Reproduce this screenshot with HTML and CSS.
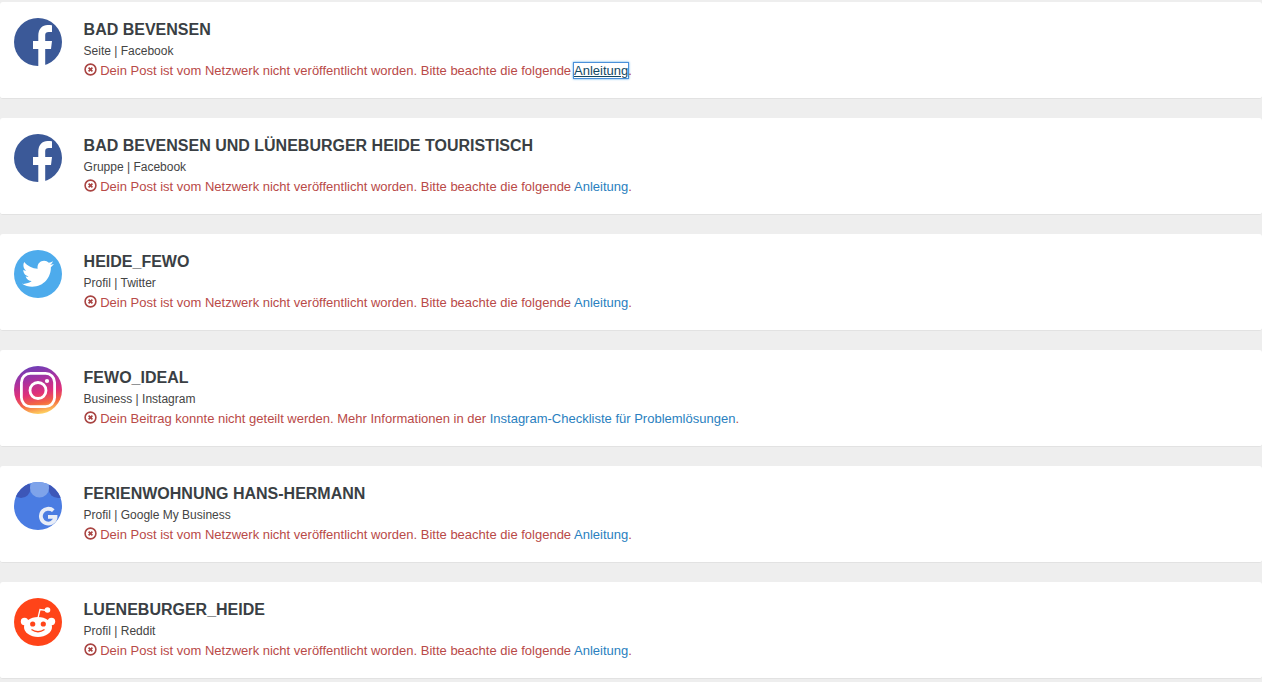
FILE: index.html
```html
<!DOCTYPE html>
<html lang="de">
<head>
    <meta charset="UTF-8">
    <meta name="viewport" content="width=device-width, initial-scale=1.0">
    <title>Netzwerke</title>
    <link rel="stylesheet" href="styles.css">
</head>
<body>

    <svg class="sprite" width="0" height="0" aria-hidden="true">
        <symbol id="err" viewBox="0 0 13 13">
            <circle cx="6.5" cy="6.5" r="5.4" fill="none" stroke="currentColor" stroke-width="1.6"/>
            <path d="M4.6 4.6l3.8 3.8M8.4 4.6l-3.8 3.8" fill="none" stroke="currentColor" stroke-width="1.7"/>
        </symbol>
        <symbol id="fb" viewBox="0 0 48 48">
            <circle cx="24" cy="24" r="24" fill="#3b5998"/>
            <path d="M24.3 48V31H19v-8h5.300v-5.500C24.300 11 28.500 7 33.500 7c2 0 3.700.2 4.500.3V14h-3.300c-2.300 0-3.500 1.200-3.500 3v6H38l-1 8h-5.800v17z" fill="#fff"/>
        </symbol>
    </svg>

    <div class="card">
        <svg class="logo"><use href="#fb"/></svg>
        <div class="info">
            <div class="name">BAD BEVENSEN</div>
            <div class="type">Seite | Facebook</div>
            <div class="msg"><svg class="err"><use href="#err"/></svg> Dein Post ist vom Netzwerk nicht veröffentlicht worden. Bitte beachte die folgende <a href="#" class="focus">Anleitung</a>.</div>
        </div>
    </div>

    <div class="card">
        <svg class="logo"><use href="#fb"/></svg>
        <div class="info">
            <div class="name">BAD BEVENSEN UND LÜNEBURGER HEIDE TOURISTISCH</div>
            <div class="type">Gruppe | Facebook</div>
            <div class="msg"><svg class="err"><use href="#err"/></svg> Dein Post ist vom Netzwerk nicht veröffentlicht worden. Bitte beachte die folgende <a href="#">Anleitung</a>.</div>
        </div>
    </div>

    <div class="card">
        <svg class="logo" viewBox="0 0 48 48">
            <circle cx="24" cy="24" r="24" fill="#4dabec"/>
            <path transform="translate(23.5 24) scale(.96) translate(-24 -24)" d="M41 13.5c-1.200.5-2.500.9-3.900 1 1.400-.8 2.500-2.100 3-3.700-1.300.8-2.800 1.300-4.300 1.600-1.300-1.300-3-2.100-5-2.100-3.700 0-6.800 3-6.800 6.800 0 .5.100 1 .2 1.500-5.600-.3-10.600-3-14-7.100-.6 1-.9 2.200-.9 3.400 0 2.400 1.200 4.400 3 5.700-1.100 0-2.200-.3-3.100-.8v.1c0 3.300 2.300 6 5.500 6.700-.6.2-1.200.2-1.800.2-.4 0-.9 0-1.300-.1.900 2.700 3.400 4.700 6.400 4.700-2.300 1.800-5.300 2.900-8.500 2.900-.6 0-1.100 0-1.600-.1 3 1.900 6.600 3.100 10.500 3.100 12.600 0 19.500-10.400 19.500-19.500v-.9c1.300-1 2.500-2.200 3.400-3.500z" fill="#fff"/>
        </svg>
        <div class="info">
            <div class="name">HEIDE_FEWO</div>
            <div class="type">Profil | Twitter</div>
            <div class="msg"><svg class="err"><use href="#err"/></svg> Dein Post ist vom Netzwerk nicht veröffentlicht worden. Bitte beachte die folgende <a href="#">Anleitung</a>.</div>
        </div>
    </div>

    <div class="card">
        <svg class="logo" viewBox="0 0 48 48">
            <defs>
                <linearGradient id="ig" x1="0.3" y1="0" x2="0.5" y2="1">
                    <stop offset="0" stop-color="#6a3fb8"/>
                    <stop offset=".3" stop-color="#a832a0"/>
                    <stop offset=".58" stop-color="#e0307a"/>
                    <stop offset=".8" stop-color="#f4693f"/>
                    <stop offset="1" stop-color="#fed060"/>
                </linearGradient>
            </defs>
            <circle cx="24" cy="24" r="24" fill="url(#ig)"/>
            <rect x="7.4" y="7.4" width="33.2" height="33.2" rx="9" fill="none" stroke="#fff" stroke-width="2.8"/>
            <circle cx="24" cy="24.5" r="8" fill="none" stroke="#fff" stroke-width="2.8"/>
            <circle cx="33" cy="15" r="2.1" fill="#fff"/>
        </svg>
        <div class="info">
            <div class="name">FEWO_IDEAL</div>
            <div class="type">Business | Instagram</div>
            <div class="msg"><svg class="err"><use href="#err"/></svg> Dein Beitrag konnte nicht geteilt werden. Mehr Informationen in der <a href="#">Instagram-Checkliste für Problemlösungen</a>.</div>
        </div>
    </div>

    <div class="card">
        <svg class="logo" viewBox="0 0 48 48">
            <defs>
                <clipPath id="gmb"><circle cx="24" cy="24" r="24"/></clipPath>
            </defs>
            <g clip-path="url(#gmb)">
                <rect width="48" height="48" fill="#4a7ce2"/>
                <circle cx="7" cy="6.5" r="9.5" fill="#3d57b8"/>
                <circle cx="44" cy="6.5" r="9.5" fill="#3d57b8"/>
                <circle cx="25.5" cy="6" r="9.5" fill="#7ea3ea"/>
            </g>
            <path d="M39.300 28.700A7.400 7.400 0 1 0 41.500 35.800V34.800H34" fill="none" stroke="#e8edf7" stroke-width="3.800"/>
        </svg>
        <div class="info">
            <div class="name">FERIENWOHNUNG HANS-HERMANN</div>
            <div class="type">Profil | Google My Business</div>
            <div class="msg"><svg class="err"><use href="#err"/></svg> Dein Post ist vom Netzwerk nicht veröffentlicht worden. Bitte beachte die folgende <a href="#">Anleitung</a>.</div>
        </div>
    </div>

    <div class="card">
        <svg class="logo" viewBox="0 0 48 48">
            <circle cx="24" cy="24" r="24" fill="#ff4419"/>
            <circle cx="33.5" cy="12" r="2.8" fill="#fff"/>
            <path d="M24 20l2-8.500 7 1" fill="none" stroke="#fff" stroke-width="1.3"/>
            <circle cx="10.5" cy="23.5" r="3.7" fill="#fff"/>
            <circle cx="37.5" cy="23.5" r="3.7" fill="#fff"/>
            <ellipse cx="24" cy="29" rx="14" ry="10" fill="#fff"/>
            <circle cx="18.7" cy="26" r="2.6" fill="#ff4419"/>
            <circle cx="29.3" cy="26" r="2.6" fill="#ff4419"/>
            <path d="M17.5 31.5c4 2.800 9 2.800 13 0" fill="none" stroke="#ff4419" stroke-width="1.3"/>
        </svg>
        <div class="info">
            <div class="name">LUENEBURGER_HEIDE</div>
            <div class="type">Profil | Reddit</div>
            <div class="msg"><svg class="err"><use href="#err"/></svg> Dein Post ist vom Netzwerk nicht veröffentlicht worden. Bitte beachte die folgende <a href="#">Anleitung</a>.</div>
        </div>
    </div>

</body>
</html>
```

FILE: styles.css
```css
body {
    margin: 0;
    padding-top: 2px;
    height: 680px;
    overflow: hidden;
    background-color: #eeeeee;
    color: #444444;
    font-family: "Liberation Sans", Arial, sans-serif;
}
.sprite {
    position: absolute;
}
.card {
    display: flex;
    box-sizing: border-box;
    height: 97px;
    margin-bottom: 19px;
    padding: 16px 14px 0;
    background-color: #ffffff;
    border-bottom: 1px solid #e2e2e2;
    border-radius: 3px;
}
.logo {
    flex: none;
    width: 48px;
    height: 48px;
    margin-right: 21.6px;
}
.info {
    min-width: 0;
}
.name {
    margin-top: 2px;
    font-size: 16px;
    font-weight: bold;
    line-height: 20px;
    color: #3a3f44;
}
.type {
    margin-top: 2px;
    font-size: 12px;
    line-height: 18px;
}
.msg {
    margin-top: 1px;
    font-size: 13px;
    line-height: 20px;
    color: #b94a48;
}
.err {
    width: 13px;
    height: 13px;
    vertical-align: -1px;
    color: #a94442;
}
.msg a {
    color: #2a7fc0;
    text-decoration: none;
}
.msg a.focus {
    color: #124964;
    text-decoration: underline;
    box-shadow: 0 0 0 1px #4a90d9, 0 0 2px 1px rgba(30, 140, 220, 0.8);
}
```
